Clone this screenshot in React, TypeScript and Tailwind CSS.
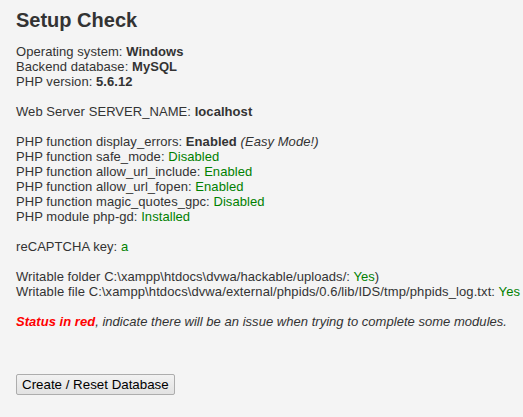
import React from 'react';

const Ok = ({ children }: { children: React.ReactNode }) => (
  <span className="text-[#008000]">{children}</span>
);

const App: React.FC = () => {
  return (
    <div className="min-h-screen w-full overflow-hidden bg-[#f4f4f4] text-[#333] font-['Liberation_Sans',Arial,sans-serif]">
      <div className="px-4 pt-2 text-[13px] leading-[15px] whitespace-nowrap tracking-[0.06px]">
        <h1 className="text-[20px] leading-[24px] font-bold tracking-normal mb-[12px]">Setup Check</h1>

        <div>Operating system: <b>Windows</b></div>
        <div>Backend database: <b>MySQL</b></div>
        <div>PHP version: <b>5.6.12</b></div>
        <div className="h-[15px]" />
        <div>Web Server SERVER_NAME: <b>localhost</b></div>
        <div className="h-[15px]" />
        <div>PHP function display_errors: <b>Enabled</b> <i>(Easy Mode!)</i></div>
        <div>PHP function safe_mode: <Ok>Disabled</Ok></div>
        <div>PHP function allow_url_include: <Ok>Enabled</Ok></div>
        <div>PHP function allow_url_fopen: <Ok>Enabled</Ok></div>
        <div>PHP function magic_quotes_gpc: <Ok>Disabled</Ok></div>
        <div>PHP module php-gd: <Ok>Installed</Ok></div>
        <div className="h-[15px]" />
        <div>reCAPTCHA key: <Ok>a</Ok></div>
        <div className="h-[15px]" />
        <div>Writable folder C:\xampp\htdocs\dvwa/hackable/uploads/: <Ok>Yes</Ok>)</div>
        <div className="tracking-[0.1px]">Writable file C:\xampp\htdocs\dvwa/external/phpids/0.6/lib/IDS/tmp/phpids_log.txt: <Ok>Yes</Ok></div>
        <div className="h-[15px]" />
        <div className="italic tracking-[0.03px]">
          <span className="font-bold text-[#ff0000]">Status in red</span>, indicate there will be an issue when trying to complete some modules.
        </div>

        <div className="mt-[45px]">
          <button className="h-[21px] px-[5px] border border-[#adadad] rounded-[2px] bg-gradient-to-b from-[#f2f2f2] to-[#e2e2e2] text-[13.33px] leading-[15px] tracking-normal text-black">
            Create / Reset Database
          </button>
        </div>
      </div>
    </div>
  );
};

export default App;
